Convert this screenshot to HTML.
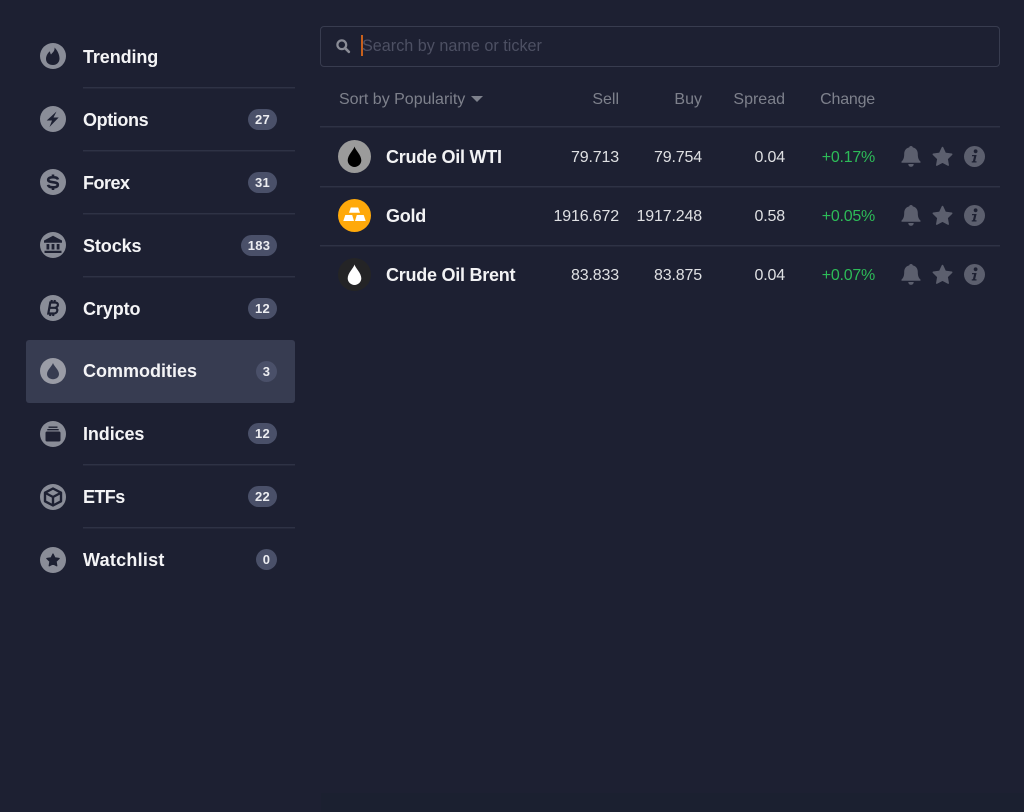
<!DOCTYPE html>
<html lang="en"><head><meta charset="utf-8"><style>
html,body{margin:0;padding:0;width:1024px;height:812px;overflow:hidden;background:#1d2032;font-family:"Liberation Sans",sans-serif}
.a{position:absolute;white-space:nowrap}
.line{position:absolute;height:2px;background:linear-gradient(#2e3245 50%,#25283a 50%)}
.nav{position:absolute;left:83px;font-size:18px;font-weight:bold;color:#f4f4f6;line-height:24px;letter-spacing:-.1px}
.ic{position:absolute;left:40px;width:26px;height:26px}
.b{position:absolute;height:21px;line-height:21px;border-radius:11px;background:#4a5069;color:#ecedf1;font-size:13px;font-weight:bold;text-align:center;letter-spacing:.3px}
.h{position:absolute;font-size:16px;color:#7e818c;line-height:20px;text-align:right}
.v{position:absolute;font-size:16px;color:#dfe0e3;line-height:20px;text-align:right;letter-spacing:-.15px}
.g{position:absolute;font-size:16px;color:#2dbb58;line-height:20px;text-align:right;letter-spacing:-.25px}
.n{position:absolute;left:386px;font-size:18px;font-weight:bold;color:#f2f2f4;line-height:24px;letter-spacing:-.25px}
svg{position:absolute;overflow:visible}
</style></head><body>
<div class="a" style="left:321px;top:793px;width:703px;height:19px;background:#1b2030"></div>
<div class="a" style="left:26px;top:340px;width:269px;height:63px;background:#373c51;border-radius:3px"></div>

<div class="line" style="left:83px;top:87px;width:212px"></div>
<div class="line" style="left:83px;top:150px;width:212px"></div>
<div class="line" style="left:83px;top:213px;width:212px"></div>
<div class="line" style="left:83px;top:276px;width:212px"></div>
<div class="line" style="left:83px;top:464px;width:212px"></div>
<div class="line" style="left:83px;top:527px;width:212px"></div>

<svg class="ic" style="top:43px" viewBox="0 0 26 26"><circle cx="13" cy="13" r="13" fill="#8a8d98"/><path d="M14.500 4.500C15 8 12.500 9.500 11 11.500 10.400 10.500 10 9.500 10 8.200 7.500 10 6 13 6 16c0 3.800 3 6 7 6s6.500-2.800 6.500-6.500C19.500 11 17 7 14.500 4.500z" fill="#1d2032"/></svg>
<svg class="ic" style="top:106px" viewBox="0 0 26 26"><circle cx="13" cy="13" r="13" fill="#8a8d98"/><path d="M16.500 5.500 6.700 14.500H12L9.500 21 18.700 11.500H13.500z" fill="#1d2032"/></svg>
<svg class="ic" style="top:169px" viewBox="0 0 26 26"><circle cx="13" cy="13" r="13" fill="#8a8d98"/><path d="M18 10.500C17.500 8.800 15.500 8.200 13 8.200c-3 0-4.800 1-4.800 2.700 0 3.500 9.600 1.100 9.600 4.800 0 1.700-1.800 2.600-4.800 2.600-3 0-4.600-.8-5-2.500M13 5.500v3M13 18v3" fill="none" stroke="#1d2032" stroke-width="2.600"/></svg>
<svg class="ic" style="top:232px" viewBox="0 0 26 26"><circle cx="13" cy="13" r="13" fill="#8a8d98"/><path d="M13 3.800 4 8.500v2.200h18V8.500zM6.500 12h2.800v5.500H6.500zM11.600 12h2.800v5.500h-2.800zM16.700 12h2.800v5.500h-2.800zM4.500 18.700h17V21h-17z" fill="#1d2032"/></svg>
<svg class="ic" style="top:295px" viewBox="0 0 26 26"><circle cx="13" cy="13" r="13" fill="#8a8d98"/><path d="M10.300 7.500h4.700c2 0 3.100 1 2.900 2.500-.2 1.500-1.300 2.500-3.100 2.800 1.800.2 2.700 1.300 2.500 2.800-.2 1.800-1.800 2.900-3.900 2.900H8.300zM10 12.800h4.800M11.800 5l-.4 2.500M14.800 5l-.4 2.500M10.500 18.500l-.4 2.500M13.500 18.500l-.4 2.500" fill="none" stroke="#1d2032" stroke-width="2.200"/></svg>
<svg class="ic" style="top:358px" viewBox="0 0 26 26"><circle cx="13" cy="13" r="13" fill="#9a9ca6"/><path d="M13 5c-.8 3-6 7-6 11 0 3 2.600 5.200 6 5.200s6-2.200 6-5.200c0-4-5.200-8-6-11z" fill="#373c51"/></svg>
<svg class="ic" style="top:421px" viewBox="0 0 26 26"><circle cx="13" cy="13" r="13" fill="#8a8d98"/><path d="M8.500 5.500h9v1.400h-9zM7.300 8h11.400v1.400H7.300z" fill="#1d2032"/><rect x="5.500" y="10.500" width="15" height="10" rx="1.500" fill="#1d2032"/></svg>
<svg class="ic" style="top:484px" viewBox="0 0 26 26"><circle cx="13" cy="13" r="13" fill="#8a8d98"/><path d="M13 4.500 5 8.700v8.600l8 4.200 8-4.200V8.700zM5.500 9 13 13l7.500-4M13 13v8.500" fill="none" stroke="#1d2032" stroke-width="2.400" stroke-linejoin="round"/></svg>
<svg class="ic" style="top:547px" viewBox="0 0 26 26"><circle cx="13" cy="13" r="13" fill="#8a8d98"/><path d="m13 7 1.900 3.900 4.300.6-3.100 3 .7 4.300-3.800-2-3.800 2 .7-4.300-3.100-3 4.300-.6z" fill="#1d2032" stroke="#1d2032" stroke-width="1.200" stroke-linejoin="round"/></svg>

<div class="nav" style="top:45px">Trending</div>
<div class="nav" style="top:108px;letter-spacing:-.4px">Options</div>
<div class="nav" style="top:171px;letter-spacing:-.5px">Forex</div>
<div class="nav" style="top:234px">Stocks</div>
<div class="nav" style="top:297px">Crypto</div>
<div class="nav" style="top:359px;letter-spacing:0">Commodities</div>
<div class="nav" style="top:422px">Indices</div>
<div class="nav" style="top:485px;letter-spacing:-.6px">ETFs</div>
<div class="nav" style="top:548px;letter-spacing:.25px">Watchlist</div>

<div class="b" style="left:248px;top:109px;width:29px">27</div>
<div class="b" style="left:248px;top:172px;width:29px">31</div>
<div class="b" style="left:241px;top:235px;width:36px">183</div>
<div class="b" style="left:248px;top:298px;width:29px">12</div>
<div class="b" style="left:256px;top:361px;width:21px">3</div>
<div class="b" style="left:248px;top:423px;width:29px">12</div>
<div class="b" style="left:248px;top:486px;width:29px">22</div>
<div class="b" style="left:256px;top:549px;width:21px">0</div>

<div class="a" style="left:320px;top:26px;width:678px;height:39px;border:1px solid #383c4f;border-radius:4px"></div>
<svg style="left:336px;top:39px" width="14" height="14" viewBox="0 0 15 15"><circle cx="6.200" cy="6.200" r="4.700" fill="none" stroke="#8a8c96" stroke-width="2.400"/><path d="m9.800 9.800 4 4" stroke="#8a8c96" stroke-width="2.800" stroke-linecap="round"/></svg>
<div class="a" style="left:361px;top:35px;width:2px;height:21px;background:#c8601c"></div>
<div class="a" style="left:362px;top:35.500px;font-size:16.200px;line-height:21px;color:#4d5063">Search by name or ticker</div>

<div class="h" style="left:339px;top:90px;text-align:left">Sort by Popularity</div>
<svg style="left:471px;top:96px" width="12" height="6" viewBox="0 0 12 6"><path d="M0 0h12L6 6z" fill="#7e818c"/></svg>
<div class="h" style="right:405px;top:90px">Sell</div>
<div class="h" style="right:322px;top:90px">Buy</div>
<div class="h" style="right:239px;top:90px">Spread</div>
<div class="h" style="right:149px;top:90px;letter-spacing:-.2px">Change</div>

<div class="line" style="left:320px;top:126px;width:680px"></div>
<div class="line" style="left:320px;top:186px;width:680px"></div>
<div class="line" style="left:320px;top:245px;width:680px"></div>

<svg style="left:338px;top:140px" width="33" height="33" viewBox="0 0 33 33"><circle cx="16.500" cy="16.500" r="16.500" fill="#9b9b9b"/><path d="M16.500 6.500c-.8 3.500-6.800 8.500-6.800 13.800 0 3.700 3 6.700 6.800 6.700s6.800-3 6.800-6.700c0-5.300-6-10.300-6.800-13.800z" fill="#000"/></svg>
<svg style="left:338px;top:199px" width="33" height="33" viewBox="0 0 33 33"><circle cx="16.500" cy="16.500" r="16.500" fill="#ffa90a"/><path d="M12.800 8.500h7.400l1.800 5.300H11zM7.300 16h6.900l1.800 6H5.300zM18.800 16h6.900l2 6H17z" fill="#fff"/></svg>
<svg style="left:338px;top:258px" width="33" height="33" viewBox="0 0 33 33"><circle cx="16.500" cy="16.500" r="16.500" fill="#242426"/><path d="M16.500 6.500c-.8 3.500-6.800 8.500-6.800 13.800 0 3.700 3 6.700 6.800 6.700s6.800-3 6.800-6.700c0-5.300-6-10.300-6.800-13.800z" fill="#fff"/></svg>

<div class="n" style="top:145px">Crude Oil WTI</div>
<div class="n" style="top:204px">Gold</div>
<div class="n" style="top:263px">Crude Oil Brent</div>

<div class="v" style="right:405px;top:148px">79.713</div>
<div class="v" style="right:322px;top:148px">79.754</div>
<div class="v" style="right:239px;top:148px">0.04</div>
<div class="g" style="right:149px;top:148px">+0.17%</div>
<div class="v" style="right:405px;top:207px">1916.672</div>
<div class="v" style="right:322px;top:207px">1917.248</div>
<div class="v" style="right:239px;top:207px">0.58</div>
<div class="g" style="right:149px;top:207px">+0.05%</div>
<div class="v" style="right:405px;top:266px">83.833</div>
<div class="v" style="right:322px;top:266px">83.875</div>
<div class="v" style="right:239px;top:266px">0.04</div>
<div class="g" style="right:149px;top:266px">+0.07%</div>

<svg width="0" height="0" style="position:absolute"><defs>
<g id="bell"><path d="M10 0c1 0 1.700.6 1.800 1.400 3.300.7 5 3.400 5 6.600 0 3.800.8 5.800 2.600 7.500.5.500.2 1.300-.5 1.300H1.100c-.7 0-1-.8-.5-1.300C2.400 13.800 3.200 11.800 3.200 8c0-3.200 1.700-5.900 5-6.600C8.300.6 9 0 10 0zM7.300 18h5.400c0 1.700-1.100 2.800-2.700 2.800S7.300 19.700 7.300 18z" fill="#5c5f6e"/></g>
<g id="star"><path d="m10.500 1.500 2.800 5.900 6.400.9-4.600 4.500 1.100 6.300-5.700-3-5.700 3 1.100-6.300-4.600-4.500 6.400-.9z" fill="#5c5f6e" stroke="#5c5f6e" stroke-width="1.500" stroke-linejoin="round"/></g>
<g id="info"><circle cx="10.500" cy="10.500" r="10.500" fill="#5c5f6e"/><circle cx="11.600" cy="5.300" r="1.900" fill="#1d2032"/><path d="M8 9h4.600l-1.500 6.200h1.400v1.300H7.700l.1-1.300h1.100l1.200-4.900H8z" fill="#1d2032"/></g>
</defs></svg>

<svg style="left:901px;top:146px" width="20" height="21" viewBox="0 0 20 21"><use href="#bell"/></svg>
<svg style="left:932px;top:146px" width="21" height="21" viewBox="0 0 21 21"><use href="#star"/></svg>
<svg style="left:964px;top:146px" width="21" height="21" viewBox="0 0 21 21"><use href="#info"/></svg>
<svg style="left:901px;top:205px" width="20" height="21" viewBox="0 0 20 21"><use href="#bell"/></svg>
<svg style="left:932px;top:205px" width="21" height="21" viewBox="0 0 21 21"><use href="#star"/></svg>
<svg style="left:964px;top:205px" width="21" height="21" viewBox="0 0 21 21"><use href="#info"/></svg>
<svg style="left:901px;top:264px" width="20" height="21" viewBox="0 0 20 21"><use href="#bell"/></svg>
<svg style="left:932px;top:264px" width="21" height="21" viewBox="0 0 21 21"><use href="#star"/></svg>
<svg style="left:964px;top:264px" width="21" height="21" viewBox="0 0 21 21"><use href="#info"/></svg>
</body></html>
